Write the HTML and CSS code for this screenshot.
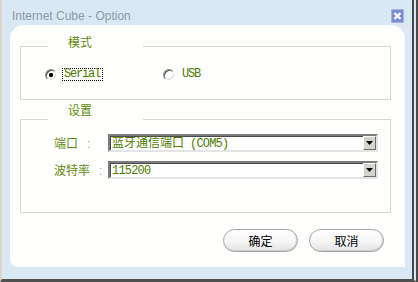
FILE: index.html
```html
<!DOCTYPE html>
<html lang="zh-CN">
<head>
    <meta charset="UTF-8">
    <title>Internet Cube - Option</title>
    <link rel="stylesheet" href="styles.css">
</head>
<body>
    <div class="window">
        <div class="titlebar">
            <span class="title">Internet Cube - Option</span>
            <svg class="close" width="13" height="14" viewBox="0 0 13 14">
                <rect x="0.5" y="0.5" width="12" height="13" fill="#7b8fcf" stroke="#a3b2e2"/>
                <path d="M3.5 4 L9.5 10 M9.5 4 L3.5 10" stroke="#fff" stroke-width="2.2"/>
            </svg>
        </div>
        <div class="panel">
            <fieldset class="group group-mode">
                <legend class="legend-mode">模式</legend>
                <div class="mode-row">
                    <label class="option option-first">
                        <span class="radio checked"></span>
                        <span class="opt-text focus">Serial</span>
                    </label>
                    <label class="option">
                        <span class="radio"></span>
                        <span class="opt-text">USB</span>
                    </label>
                </div>
            </fieldset>
            <fieldset class="group group-settings">
                <legend class="legend-settings">设置</legend>
                <div class="field-row">
                    <span class="field-label">端口<span class="colon">:</span></span>
                    <div class="combo">
                        <span class="combo-text">蓝牙通信端口<span class="mono mono-gap">(COM5)</span></span>
                        <span class="combo-btn"><svg width="7" height="4" viewBox="0 0 7 4"><path d="M0 0 H7 L3.5 4 Z" fill="#000"/></svg></span>
                    </div>
                </div>
                <div class="field-row field-row-last">
                    <span class="field-label">波特率<span class="colon">:</span></span>
                    <div class="combo">
                        <span class="combo-text"><span class="mono">115200</span></span>
                        <span class="combo-btn"><svg width="7" height="4" viewBox="0 0 7 4"><path d="M0 0 H7 L3.5 4 Z" fill="#000"/></svg></span>
                    </div>
                </div>
            </fieldset>
            <div class="buttons">
                <button class="btn">确定</button>
                <button class="btn">取消</button>
            </div>
        </div>
        <div class="bottom-strip"></div>
    </div>
</body>
</html>
```

FILE: styles.css
```css
body {
    margin: 0;
    padding: 0;
    font-family: "Noto Sans CJK SC", sans-serif;
    font-size: 12px;
}
.window {
    width: 418px;
    height: 282px;
    box-sizing: border-box;
    background-color: #dae8f4;
    border-left: 2px solid #d9d5ca;
    border-right: 6px double #4a4a4a;
    border-bottom: 3px solid #505050;
    display: flex;
    flex-direction: column;
}
.titlebar {
    height: 25px;
    box-sizing: border-box;
    display: flex;
    justify-content: space-between;
    align-items: flex-start;
    padding: 9px 8px 0 10px;
}
.title {
    font-family: "Liberation Sans", Arial, sans-serif;
    font-size: 12px;
    line-height: 14px;
    color: #8f99a4;
}
.close {
    display: block;
}
.panel {
    height: 242px;
    box-sizing: border-box;
    margin: 0 7px 0 8px;
    padding: 11px 14px 0 10px;
    background-color: #fffffe;
    border-radius: 14px 14px 0 8px;
}
.group {
    margin: 0;
    padding: 0;
    min-width: 0;
    border: 1px solid #d6d6d6;
}
.group legend {
    margin-left: 27px;
    width: 95px;
    box-sizing: border-box;
    padding: 0 0 0 20px;
    font-size: 12px;
    line-height: 12px;
    color: #5e8c0c;
    background-color: #fffffe;
}
.legend-mode {
    padding-bottom: 8px !important;
}
.legend-settings {
    padding-bottom: 18px !important;
}
.group-settings {
    margin-top: 4px;
}
.mode-row {
    display: flex;
    align-items: center;
    height: 13px;
    margin: 12px 0 18px 0;
    padding-left: 24px;
}
.option {
    display: flex;
    align-items: center;
}
.option-first {
    width: 118px;
}
.radio {
    width: 12px;
    height: 12px;
    box-sizing: border-box;
    border-radius: 50%;
    border: 1px solid;
    border-color: #8a8a8a #ffffff #ffffff #8a8a8a;
    box-shadow: inset 1px 1px 0 #5a5a5a, inset -1px -1px 0 #dcd9d0;
    background-color: #fff;
    margin-right: 5px;
}
.radio.checked {
    background: radial-gradient(circle, #000 0, #000 1.8px, #fff 2.4px);
}
.opt-text {
    font-family: "Liberation Mono", monospace;
    font-size: 12px;
    letter-spacing: -1.2px;
    line-height: 11px;
    color: #4d7c00;
    border: 1px solid transparent;
    padding: 0 2px 0 1px;
}
.opt-text.focus {
    border: 1px dotted #000;
}
.field-row {
    display: flex;
    align-items: center;
    padding-left: 33px;
}
.field-row-last {
    margin-top: 9px;
    margin-bottom: 33px;
}
.field-label {
    width: 54px;
    color: #5e8c0c;
    line-height: 14px;
    white-space: nowrap;
}
.colon {
    font-family: "Liberation Sans", sans-serif;
    margin-left: 9px;
    color: #a8a8a8;
}
.combo {
    width: 270px;
    height: 18px;
    box-sizing: border-box;
    border: 2px solid;
    border-color: #7c7c7c #e4e4e4 #e4e4e4 #7c7c7c;
    box-shadow: inset 1px 1px 0 #4a4a4a;
    background-color: #fff;
    display: flex;
    align-items: center;
    justify-content: space-between;
}
.combo-text {
    padding-left: 2px;
    line-height: 14px;
    color: #4d7c00;
    white-space: nowrap;
}
.mono {
    font-family: "Liberation Mono", monospace;
    font-size: 12px;
    letter-spacing: -0.8px;
}
.mono-gap {
    margin-left: 6px;
}
.combo-btn {
    width: 13px;
    height: 14px;
    box-sizing: border-box;
    background-color: #d6d3cb;
    border: 1px solid;
    border-color: #ffffff #6e6e6e #6e6e6e #ffffff;
    display: flex;
    align-items: center;
    justify-content: center;
}
.combo-btn svg {
    display: block;
}
.buttons {
    margin-top: 16px;
    display: flex;
    justify-content: flex-end;
    gap: 11px;
    padding-right: 7px;
}
.btn {
    width: 75px;
    height: 23px;
    box-sizing: border-box;
    border: 1px solid #a4a4a4;
    border-radius: 12px;
    background: linear-gradient(#ffffff, #f6f6f6 55%, #e2e2e2);
    box-shadow: inset -1px -1px 0 #d0d0d0;
    font-family: "Noto Sans CJK SC", sans-serif;
    font-size: 12px;
    line-height: 14px;
    color: #000;
    padding: 0;
}
.bottom-strip {
    flex: 1;
}
```
